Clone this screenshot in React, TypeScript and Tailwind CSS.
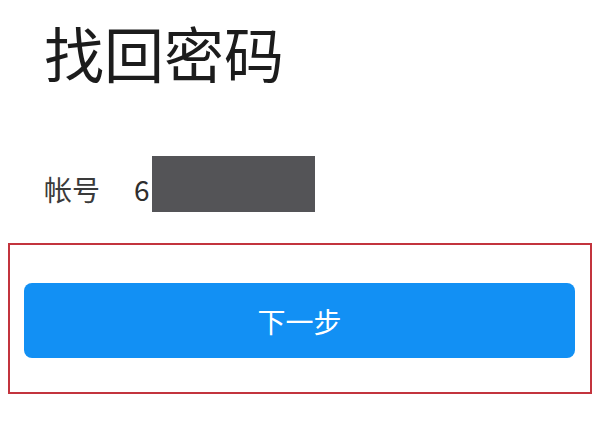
import React from 'react'

const cjk = { fontFamily: '"Noto Sans CJK SC", "Noto Sans", sans-serif' }

export default function App() {
  return (
    <div className="w-[600px] h-[448px] bg-white overflow-hidden" style={cjk}>
      {/* Title */}
      <h1 className="pt-[22px] pl-[44px] text-[60px] leading-[60px] font-normal text-[#1c1c1c]">
        找回密码
      </h1>

      {/* Account row */}
      <div className="mt-[74px] pl-[44px] flex items-start h-[56px]">
        <span className="mt-[19px] text-[28px] leading-[28px] text-[#3a3a3a]">帐号</span>
        <span className="mt-[19px] ml-[34px] text-[28px] leading-[28px] text-[#2e2e2e]">6</span>
        <div className="ml-[2px] w-[163px] h-[56px] bg-[#545457]" />
      </div>

      {/* Highlighted action */}
      <div className="mt-[31px] ml-[8px] w-[584px] h-[151px] border-2 border-[#c3343d] pt-[38px] pl-[14px] pr-[15px]">
        <button className="w-full h-[75px] rounded-[8px] bg-[#1290f4] text-white text-[28px] leading-none flex items-center justify-center">
          下一步
        </button>
      </div>
    </div>
  )
}
